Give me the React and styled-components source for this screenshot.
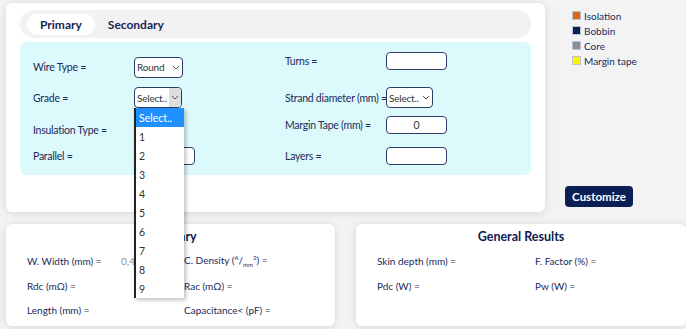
import React from "react";
import styled, { createGlobalStyle } from "styled-components";

const Global = createGlobalStyle`
  html, body { margin: 0; padding: 0; }
  body {
    background: #f3f3f3;
    font-family: Lato, "Noto Sans", sans-serif;
    color: #1b2a5a;
    width: 686px; height: 329px; overflow: hidden;
  }
`;

const Page = styled.div`
  padding: 3px 0 0 6px;
  display: flex;
  flex-direction: column;
  gap: 12px;
`;

const TopRow = styled.div`
  display: flex;
`;

const TopCard = styled.div`
  width: 539px;
  height: 209px;
  box-sizing: border-box;
  background: #fff;
  border-radius: 6px;
  box-shadow: 0 1px 8px rgba(0,0,0,0.12);
  padding: 7px 14px;
  display: flex;
  flex-direction: column;
  gap: 4px;
`;

const Tabs = styled.div`
  height: 28px;
  background: #f2f2f2;
  border-radius: 14px;
  display: flex;
  align-items: center;
  padding-left: 7px;
`;

const Tab = styled.div`
  height: 21px;
  padding: 0 13px;
  box-sizing: border-box;
  border-radius: 11px;
  background: ${p => (p.$active ? "#fff" : "transparent")};
  display: flex;
  align-items: center;
  justify-content: center;
  font-weight: 700;
  font-size: 12px;
  color: #1a2350;
`;

const Panel = styled.div`
  height: 133px;
  background: #dcf9fc;
  border-radius: 6px;
  display: grid;
  grid-template-columns: 252px 1fr;
  padding-left: 13px;
`;

const Column = styled.div`
  display: flex;
  flex-direction: column;
  padding-top: ${p => p.$pt}px;
`;

const FormRow = styled.div`
  display: flex;
  align-items: center;
  height: ${p => p.$h}px;
  margin-top: ${p => p.$mt || 0}px;
`;

const Label = styled.div`
  width: ${p => p.$w}px;
  font-size: 10.5px;
  letter-spacing: -0.25px;
  color: #1b2a5a;
  white-space: nowrap;
`;

const Input = styled.div`
  width: ${p => p.$w}px;
  height: ${p => p.$h}px;
  box-sizing: border-box;
  border: 1px solid #2d3c66;
  border-radius: 4px;
  background: #fff;
  font-size: 10.5px;
  color: #333;
  display: flex;
  align-items: center;
  justify-content: center;
`;

const Select = styled.div`
  width: ${p => p.$w}px;
  height: ${p => p.$h}px;
  box-sizing: border-box;
  border: 1px solid #2d3c66;
  border-radius: 4px;
  background: #fff;
  font-size: 10px;
  letter-spacing: -0.2px;
  color: #333;
  display: flex;
  align-items: stretch;
  overflow: hidden;
`;

const SelectText = styled.div`
  flex: 1;
  display: flex;
  align-items: center;
  padding-left: 2px;
  white-space: nowrap;
`;

const SelectArrow = styled.div`
  width: 12px;
  flex: none;
  display: flex;
  align-items: center;
  justify-content: center;
  background: ${p => (p.$hover ? "#dedede" : "transparent")};
`;

const Side = styled.div`
  flex: 1;
  display: flex;
  flex-direction: column;
  padding: 7px 0 0 27px;
`;

const Legend = styled.div`
  display: flex;
  flex-direction: column;
  gap: 4px;
`;

const LegendItem = styled.div`
  display: flex;
  align-items: center;
  gap: 3px;
  font-size: 10px;
  color: #1b2a5a;
  height: 11px;
`;

const Swatch = styled.span`
  width: 7px;
  height: 7px;
  background: ${p => p.$c};
  border: 1px solid #b9c3d6;
`;

const Button = styled.button`
  margin: 120px 0 0 -7px;
  width: 68px;
  height: 21px;
  border: none;
  border-radius: 4px;
  background: #0b1f55;
  color: #fff;
  font-family: Lato, "Noto Sans", sans-serif;
  font-weight: 700;
  font-size: 11.5px;
  padding: 0;
`;

const BottomRow = styled.div`
  display: flex;
  gap: 21px;
`;

const ResultCard = styled.div`
  width: ${p => p.$w}px;
  height: 102px;
  box-sizing: border-box;
  background: #fff;
  border-radius: 6px;
  box-shadow: 0 1px 8px rgba(0,0,0,0.12);
  padding: 4px 0 0 21px;
  display: flex;
  flex-direction: column;
`;

const CardTitle = styled.div`
  font-weight: 700;
  font-size: 12.5px;
  color: #0d1b4f;
  text-align: center;
  height: 17px;
  line-height: 17px;
  margin-left: -21px;
`;

const ResultGrid = styled.div`
  display: grid;
  grid-template-columns: ${p => p.$cols};
  grid-auto-rows: 24.5px;
  margin-top: 4px;
  align-items: center;
`;

const RLabel = styled.div`
  font-size: 10px;
  color: #1b2a5a;
  white-space: nowrap;
`;

const RValue = styled.div`
  font-size: 10px;
  color: #8a93a8;
`;

const Dropdown = styled.div`
  position: absolute;
  left: 134px;
  top: 108px;
  width: 48px;
  background: #fff;
  border-left: 2px solid #222;
  box-shadow: 2px 2px 4px rgba(0,0,0,0.25);
  z-index: 10;
`;

const Option = styled.div`
  height: 19px;
  display: flex;
  align-items: center;
  padding-left: 3px;
  font-size: 10.5px;
  color: ${p => (p.$sel ? "#fff" : "#333")};
  background: ${p => (p.$sel ? "#1e90ff" : "transparent")};
`;

const Chevron = () => (
  <svg width="8" height="5" viewBox="0 0 8 5">
    <path d="M1 1l3 3 3-3" fill="none" stroke="#555" strokeWidth="1" />
  </svg>
);

const Sup = styled.sup`
  font-size: 6px;
`;
const Sub = styled.sub`
  font-size: 6px;
`;

export default function App() {
  return (
    <>
      <Global />
      <Page>
        <TopRow>
          <TopCard>
            <Tabs>
              <Tab $active>Primary</Tab>
              <Tab>Secondary</Tab>
            </Tabs>
            <Panel>
              <Column $pt={15}>
                <FormRow $h={20}>
                  <Label $w={101}>Wire Type =</Label>
                  <Select $w={49} $h={21}>
                    <SelectText>Round</SelectText>
                    <SelectArrow><Chevron /></SelectArrow>
                  </Select>
                </FormRow>
                <FormRow $h={21} $mt={10}>
                  <Label $w={101}>Grade =</Label>
                  <Select $w={48} $h={21}>
                    <SelectText>Select..</SelectText>
                    <SelectArrow $hover><Chevron /></SelectArrow>
                  </Select>
                </FormRow>
                <FormRow $h={20} $mt={12}>
                  <Label $w={101}>Insulation Type =</Label>
                  <Select $w={49} $h={20}>
                    <SelectText>Select..</SelectText>
                    <SelectArrow><Chevron /></SelectArrow>
                  </Select>
                </FormRow>
                <FormRow $h={18} $mt={7}>
                  <Label $w={101}>Parallel =</Label>
                  <Input $w={61} $h={18} />
                </FormRow>
              </Column>
              <Column $pt={10}>
                <FormRow $h={18}>
                  <Label $w={101}>Turns =</Label>
                  <Input $w={61} $h={18} />
                </FormRow>
                <FormRow $h={21} $mt={17}>
                  <Label $w={101}>Strand diameter (mm) =</Label>
                  <Select $w={47} $h={21}>
                    <SelectText>Select..</SelectText>
                    <SelectArrow><Chevron /></SelectArrow>
                  </Select>
                </FormRow>
                <FormRow $h={18} $mt={8}>
                  <Label $w={101}>Margin Tape (mm) =</Label>
                  <Input $w={61} $h={18}>0</Input>
                </FormRow>
                <FormRow $h={18} $mt={13}>
                  <Label $w={101}>Layers =</Label>
                  <Input $w={61} $h={18} />
                </FormRow>
              </Column>
            </Panel>
          </TopCard>
          <Side>
            <Legend>
              <LegendItem><Swatch $c="#e0650f" />Isolation</LegendItem>
              <LegendItem><Swatch $c="#0b1f55" />Bobbin</LegendItem>
              <LegendItem><Swatch $c="#8a8d94" />Core</LegendItem>
              <LegendItem><Swatch $c="#fbf500" />Margin tape</LegendItem>
            </Legend>
            <Button>Customize</Button>
          </Side>
        </TopRow>
        <BottomRow>
          <ResultCard $w={329}>
            <CardTitle>Summary</CardTitle>
            <ResultGrid $cols="94px 63px 1fr">
              <RLabel>W. Width (mm) =</RLabel>
              <RValue>0,45</RValue>
              <RLabel>C. Density (<Sup>A</Sup>/<Sub>mm</Sub><Sup>2</Sup>) =</RLabel>
              <RLabel>Rdc (mΩ) =</RLabel>
              <RValue />
              <RLabel>Rac (mΩ) =</RLabel>
              <RLabel>Length (mm) =</RLabel>
              <RValue />
              <RLabel>Capacitance&lt; (pF) =</RLabel>
            </ResultGrid>
          </ResultCard>
          <ResultCard $w={330}>
            <CardTitle>General Results</CardTitle>
            <ResultGrid $cols="158px 1fr">
              <RLabel>Skin depth (mm) =</RLabel>
              <RLabel>F. Factor (%) =</RLabel>
              <RLabel>Pdc (W) =</RLabel>
              <RLabel>Pw (W) =</RLabel>
            </ResultGrid>
          </ResultCard>
        </BottomRow>
      </Page>
      <Dropdown>
        <Option $sel>Select..</Option>
        {[1, 2, 3, 4, 5, 6, 7, 8, 9].map(n => (
          <Option key={n}>{n}</Option>
        ))}
      </Dropdown>
    </>
  );
}
